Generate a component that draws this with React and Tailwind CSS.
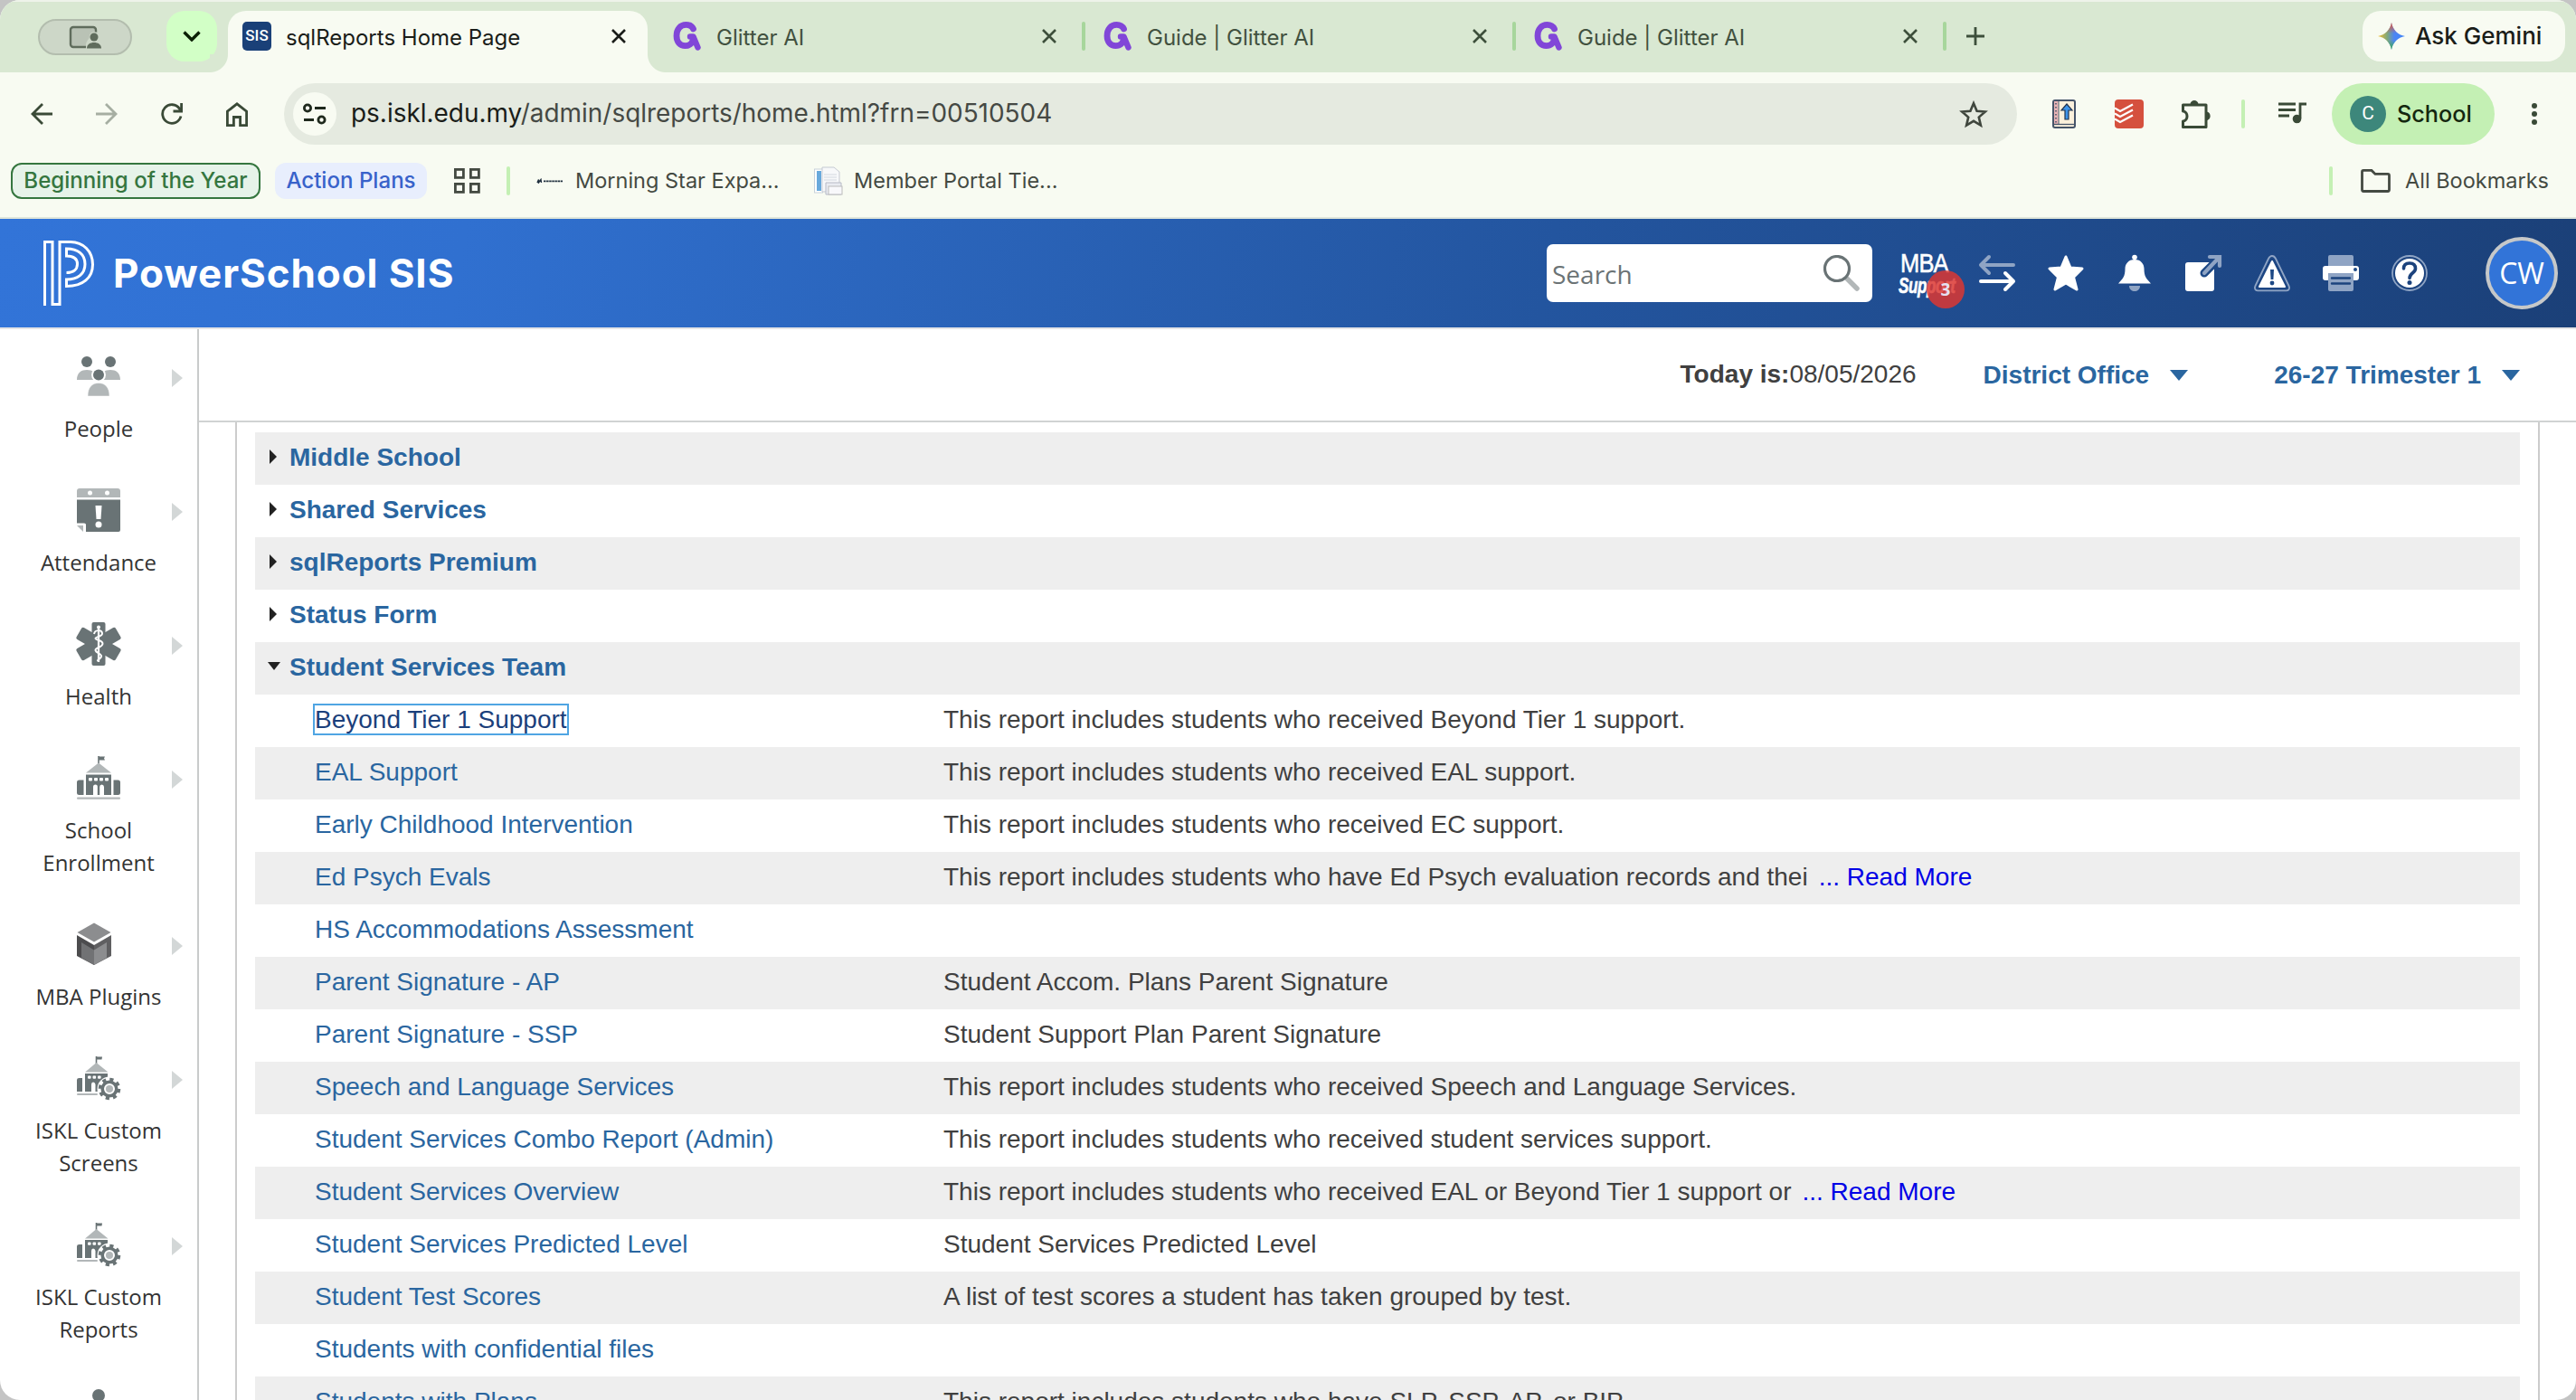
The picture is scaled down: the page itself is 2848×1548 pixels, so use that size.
import React from "react";

const INTER = "font-['Inter','Liberation_Sans',sans-serif]";
const ARIAL = "font-['Liberation_Sans',sans-serif]";
const OPEN = "font-['Open_Sans',sans-serif]";

function Close({ color }) {
  return (
    <svg viewBox="0 0 16 16" className="h-4 w-4 shrink-0" fill="none" stroke={color} strokeWidth="2.6">
      <path d="M1 1 15 15M15 1 1 15" />
    </svg>
  );
}

function Glitter() {
  return (
    <svg viewBox="0 0 32 32" className="h-8 w-8 shrink-0" fill="none">
      <path d="M22.500 8C21 4.800 17.500 3.400 14.500 3.400C8 3.400 4 8.500 4 15.500C4 22.500 8 26.600 13.500 26.600C18.500 26.600 22 23.500 22.500 18.500" stroke="#8146d8" strokeWidth="6.8" strokeLinecap="round" strokeLinejoin="round" />
      <path d="M19 16.500H22.500L27.500 28.500" stroke="#8146d8" strokeWidth="6.4" strokeLinecap="round" strokeLinejoin="round" />
    </svg>
  );
}

function Tab({ title }) {
  return (
    <div className="flex h-14 w-[478px] shrink-0 items-center pl-[22px]">
      <Glitter />
      <div className="ml-4 flex-1 whitespace-nowrap pt-[3px] text-[24px] text-[#42513f]">{title}</div>
      <Close color="#3d4f3b" />
      <div className="ml-7 h-8 w-1 rounded-full bg-[#a7d69c]" />
    </div>
  );
}

function TabStrip() {
  return (
    <div className="flex h-20 items-start bg-[#d9e8d2] pt-3 shadow-[inset_0_2px_0_#eef3ea]">
      <div className="mt-[9px] ml-[42px] flex h-10 w-[104px] items-center justify-center rounded-full border-2 border-[#b3bdae] bg-[#cdd7c8]">
        <svg viewBox="0 0 38 28" className="h-7 w-[38px]" fill="none">
          <rect x="3" y="3" width="28" height="22" rx="3" fill="#b9c2b5" stroke="#5f6c5c" strokeWidth="2.400" />
          <path d="M20 28V22C21 17 24 16 24 13C24 8 32 6 36 12V28Z" fill="#cdd7c8" />
          <circle cx="29" cy="14" r="4.500" fill="#5f6c5c" />
          <path d="M21 26.500C21 22 25 20 29 20S37 22 37 26.500Z" fill="#5f6c5c" />
        </svg>
      </div>
      <div className="ml-[38px] flex h-14 w-14 items-center justify-center rounded-[20px] bg-[#d2ffc6]">
        <svg viewBox="0 0 20 12" className="h-3 w-5" fill="none" stroke="#0b2005" strokeWidth="3.400"><path d="M1.500 1.500 10 10 18.500 1.500" /></svg>
      </div>
      <div className="flex h-[68px] w-3 items-end">
        <div className="-ml-2 h-5 w-5 shrink-0 bg-[radial-gradient(circle_at_0_0,#d9e8d2_19.500px,#f8fbf2_20.500px)]" />
      </div>
      <div className="flex h-[68px] w-[464px] items-start rounded-t-[20px] bg-[#f8fbf2] pl-4">
        <div className="mt-3 flex h-8 w-8 items-center justify-center rounded-[5px] bg-[#1a4078] font-['Roboto',sans-serif] text-[17px] font-medium text-white">SIS</div>
        <div className="ml-4 flex h-14 flex-1 items-center whitespace-nowrap pt-[3px] text-[24px] text-[#1a1d19]">sqlReports Home Page</div>
        <div className="mr-6 flex h-14 items-center"><Close color="#1a1d19" /></div>
      </div>
      <div className="flex h-[68px] w-[6px] items-end">
        <div className="h-5 w-5 shrink-0 bg-[radial-gradient(circle_at_100%_0,#d9e8d2_19.500px,#f8fbf2_20.500px)]" />
      </div>
      <Tab title="Glitter AI" />
      <div className="-ml-[2px] flex">
        <Tab title="Guide | Glitter AI" />
        <div className="-ml-[2px]"><Tab title="Guide | Glitter AI" /></div>
      </div>
      <svg viewBox="0 0 20 20" className="mt-[18px] ml-[22px] h-5 w-5" fill="none" stroke="#3d4f3b" strokeWidth="2.800"><path d="M10 0V20M0 10H20" /></svg>
      <div className="mr-3 ml-auto flex h-14 w-56 items-center rounded-[20px] bg-[#f8fbf2] pl-[17px]">
        <svg viewBox="0 0 30 30" className="h-[30px] w-[30px]">
          <defs>
            <linearGradient id="gl" x1="0" y1="0.500" x2="1" y2="0.500"><stop offset="0" stopColor="#f4bd2c" /><stop offset=".35" stopColor="#7fa87c" /><stop offset=".6" stopColor="#4c86f4" /><stop offset="1" stopColor="#3f83f8" /></linearGradient>
            <linearGradient id="gt" x1="0.500" y1="0" x2="0.500" y2="1"><stop offset="0" stopColor="#e94b3c" /><stop offset=".4" stopColor="#e94b3c" stopOpacity="0" /><stop offset=".65" stopColor="#2ea84f" stopOpacity="0" /><stop offset="1" stopColor="#2ea84f" /></linearGradient>
          </defs>
          <path d="M15 0C16.500 8 22 13.500 30 15C22 16.500 16.500 22 15 30C13.500 22 8 16.500 0 15C8 13.500 13.500 8 15 0Z" fill="url(#gl)" />
          <path d="M15 0C16.500 8 22 13.500 30 15C22 16.500 16.500 22 15 30C13.500 22 8 16.500 0 15C8 13.500 13.500 8 15 0Z" fill="url(#gt)" />
        </svg>
        <div className="mb-[2px] ml-[11px] whitespace-nowrap text-[26px] font-medium text-[#1a1d19]">Ask Gemini</div>
      </div>
    </div>
  );
}

function Toolbar() {
  return (
    <div className="flex h-[92px] items-center bg-[#f8fbf2] pl-[34px]">
      <svg viewBox="0 0 24 24" className="h-6 w-6" fill="none" stroke="#3a4a37" strokeWidth="2.800"><path d="M24 12H2M13 1 2 12 13 23" /></svg>
      <svg viewBox="0 0 24 24" className="ml-12 h-6 w-6" fill="none" stroke="#a6aea2" strokeWidth="2.800"><path d="M0 12H22M11 1 22 12 11 23" /></svg>
      <svg viewBox="0 0 24 24" className="ml-12 h-6 w-6" fill="none" stroke="#3a4a37" strokeWidth="2.800"><path d="M22 14.500A10.300 10.300 0 1 1 20.500 6.200L22.500 9M22.600 0V9H13.500" /></svg>
      <svg viewBox="0 0 24 27" className="ml-12 h-[27px] w-6" fill="none" stroke="#3a4a37" strokeWidth="2.800"><path d="M1.400 10.200 12 1.800 22.600 10.200V25.600H15.600V16.500H8.400V25.600H1.400Z" /></svg>
      <div className="ml-10 flex h-[68px] w-[1916px] items-center rounded-full bg-[#e5eae0] pl-[10px]">
        <div className="flex h-12 w-12 items-center justify-center rounded-full bg-[#f8fbf2]">
          <svg viewBox="0 0 26 24" className="h-6 w-[26px]" fill="none" stroke="#1f291d" strokeWidth="2.800"><circle cx="5" cy="5.500" r="3.600" /><path d="M13 5.500H25M1 18.500H12" /><circle cx="20.500" cy="18.500" r="3.600" /></svg>
        </div>
        <div className="ml-4 whitespace-nowrap text-[27.950px] text-[#454944]"><span className="text-[#1a1d19]">ps.iskl.edu.my</span>/admin/sqlreports/home.html?frn=00510504</div>
        <svg viewBox="0 0 32 31" className="mr-8 ml-auto h-[31px] w-8" fill="none" stroke="#3f463d" strokeWidth="2.600"><path d="M16 3.200 19.600 11.700 28.800 12.500 21.800 18.600 23.900 27.600 16 22.800 8.100 27.600 10.200 18.600 3.200 12.500 12.400 11.700Z" /></svg>
      </div>
      <svg viewBox="0 0 26 32" className="ml-[39px] h-8 w-[26px]">
        <rect x="1" y="1" width="24" height="30" rx="2" fill="#fbf0dc" stroke="#46546a" strokeWidth="2" />
        <rect x="2" y="2" width="4.500" height="25" fill="#e9b3b6" /><path d="M7 2V27" stroke="#46546a" strokeWidth="1" /><path d="M4 4V27" stroke="#46546a" strokeWidth="1.600" strokeDasharray="1.500 2.500" />
        <path d="M2 27.500H24" stroke="#46546a" strokeWidth="1.300" />
        <path d="M16 5 22 12H18V22H14V12H10Z" fill="#3f94ea" stroke="#22344f" strokeWidth="1.200" />
      </svg>
      <svg viewBox="0 0 32 32" className="ml-[43px] h-8 w-8">
        <rect width="32" height="32" rx="4" fill="#d5503e" />
        <path d="M0 9.500 6 13 20 5.500M0 15.500 6 19 20 11.500M0 21.500 6 25 20 17.500" fill="none" stroke="#fff" strokeWidth="2.200" />
      </svg>
      <svg viewBox="0 0 34 33" className="ml-[41px] h-[33px] w-[34px]">
        <path d="M2.500 13V6H28V30.500H2.500V24C8.500 23.500 8.500 13.500 2.500 13Z" fill="none" stroke="#3a4a37" strokeWidth="3" strokeLinejoin="round" />
        <path d="M10.500 5.500C10.500-.5 19.500-.5 19.500 5.500ZM28.500 13.500C34 13.500 34 23 28.500 23Z" fill="#3a4a37" />
      </svg>
      <div className="ml-[33px] h-8 w-1 rounded-full bg-[#c4f0b4]" />
      <svg viewBox="0 0 32 24" className="mb-[2px] ml-[37px] h-6 w-8" fill="none" stroke="#3a4a37" strokeWidth="2.800"><path d="M0 2H19M0 8.500H19M0 15H12M24 18V2H31" /><circle cx="20.500" cy="18.500" r="4.800" fill="#3a4a37" stroke="none" /></svg>
      <div className="ml-[27px] flex h-[68px] w-[180px] items-center rounded-full bg-[#c4f0b4] pl-5">
        <div className="flex h-10 w-10 items-center justify-center rounded-full bg-[#3d877b] font-['Roboto',sans-serif] text-[21px] text-white">C</div>
        <div className="ml-3 pt-px text-[25.200px] font-medium text-[#14270f]">School</div>
      </div>
      <div className="ml-[41px] flex flex-col gap-[3px]">
        <div className="h-[6px] w-[6px] rounded-full bg-[#3a4a37]" /><div className="h-[6px] w-[6px] rounded-full bg-[#3a4a37]" /><div className="h-[6px] w-[6px] rounded-full bg-[#3a4a37]" />
      </div>
    </div>
  );
}

function Bookmarks() {
  return (
    <div className="flex h-[70px] items-start border-b-2 border-[#dfe5da] bg-[#f8fbf2] pt-2 pl-3">
      <div className="flex h-10 w-[276px] items-center justify-center whitespace-nowrap rounded-[12px] border-2 border-[#35763f] bg-[#e6f3e9] text-[24.100px] font-medium text-[#35763f]">Beginning of the Year</div>
      <div className="ml-4 flex h-10 w-[168px] items-center justify-center whitespace-nowrap rounded-[12px] bg-[#e8eefd] text-[24.100px] font-medium text-[#3862ca]">Action Plans</div>
      <svg viewBox="0 0 29 28" className="mt-[6px] ml-[30px] h-7 w-[29px]" fill="none" stroke="#444a42" strokeWidth="2.800"><rect x="1.400" y="1.400" width="9" height="9" /><rect x="18.400" y="1.400" width="9" height="9" /><rect x="1.400" y="17.400" width="9" height="9" /><rect x="18.400" y="17.400" width="9" height="9" /></svg>
      <div className="mt-1 ml-[29px] h-8 w-1 rounded-full bg-[#c4f0b4]" />
      <svg viewBox="0 0 30 6" className="mt-[17px] ml-[29px] h-[6px] w-[30px]"><path d="M1 5 2.500 1.500V5L5 1.500 5.500 5" stroke="#20303f" strokeWidth="1.400" fill="none" /><path d="M8 3.300H29" stroke="#20303f" strokeWidth="1.700" strokeDasharray="2.500 .6" /></svg>
      <div className="ml-[13px] flex h-10 w-[264px] items-center whitespace-nowrap text-[23.500px] text-[#444a42]">Morning Star Expa...</div>
      <svg viewBox="0 0 32 32" className="mt-1 h-8 w-8">
        <rect x=".5" y="3" width="9" height="26" fill="#fff" stroke="#c8d2da" /><rect x="3" y="5" width="5" height="22" fill="#68a9dc" /><path d="M9 1H22L28 6V28H9Z" fill="#f7f8fa" stroke="#c5c9d2" /><path d="M11 9H25M11 12H25M11 15H25" stroke="#d4d8e0" strokeWidth="1.200" /><path d="M13 18H30V31H13Z" fill="#e9ebf1" stroke="#b6bac6" /><rect x="16" y="22" width="15" height="9" fill="#f8f8fb" stroke="#bbb" />
      </svg>
      <div className="ml-3 flex h-10 items-center whitespace-nowrap text-[23.500px] text-[#444a42]">Member Portal Tie...</div>
      <div className="mt-1 ml-auto h-8 w-1 rounded-full bg-[#c4f0b4]" />
      <svg viewBox="0 0 33 26" className="mt-[7px] ml-[31px] h-[26px] w-[33px]" fill="none" stroke="#444a42" strokeWidth="2.800"><path d="M3 1.400H12L16 5.400H30Q31.500 5.400 31.500 7V22.500Q31.500 24.500 30 24.500H3Q1.500 24.500 1.500 22.500V3Q1.500 1.400 3 1.400Z" /></svg>
      <div className="mr-[30px] ml-4 flex h-10 items-center whitespace-nowrap text-[23.500px] text-[#444a42]">All Bookmarks</div>
    </div>
  );
}

function HeaderIcon({ children }) {
  return <svg viewBox="0 0 40 40" className="h-10 w-10 shrink-0 overflow-visible" fill="none">{children}</svg>;
}

function AppHeader() {
  const dim = "#8fa4c4";
  return (
    <div className={`${OPEN} flex h-[122px] items-center border-b-2 border-[#e4e4e6] bg-[linear-gradient(100deg,#3274d8_0%,#3070d0_18%,#23559f_60%,#1b4078_100%)]`}>
      <svg viewBox="0 0 56 72" className="ml-12 h-[72px] w-14" fill="none" stroke="#fff" strokeWidth="3">
        <path d="M1.500 72V1.500H10V70.500H18V1.500H30C44 1.500 54.500 12 54.500 26.500S44 50.500 25.500 50.500V43C38 43 46 37 46 26S38 9 25.500 9V17C33 17 37.500 20 37.500 26S33 35.500 25.500 35.500" />
      </svg>
      <div className={`${INTER} ml-[21px] w-[400px] whitespace-nowrap text-[44px] font-bold tracking-[0.9px] text-white`}>PowerSchool SIS</div>
      <div className="ml-auto flex h-16 w-[360px] items-center rounded-[7px] bg-white pl-[6px]">
        <div className="pt-[2px] text-[28px] text-[#6b7375]">Search</div>
        <svg viewBox="0 0 40 40" className="mr-[14px] ml-auto h-10 w-10" fill="none"><path d="M26 26 37 37" stroke="#b2b7b8" strokeWidth="5.500" strokeLinecap="round" /><circle cx="15" cy="15" r="13.500" stroke="#697375" strokeWidth="3.200" /></svg>
      </div>
      <div className={`${ARIAL} relative ml-[29px] h-16 w-[60px] text-white`}>
        <div className="mt-[6px] ml-[2px] text-[30px] leading-[30px] tracking-[-1px] [transform-origin:0_0] scale-x-[0.85] [-webkit-text-stroke:0.6px_white]">MBA</div>
        <div className="-mt-px text-[23px] leading-[22px] font-bold italic tracking-[-0.5px] [transform-origin:0_0] scale-x-[0.74] [-webkit-text-stroke:0.6px_white]">Support</div>
        <div className={`${OPEN} absolute top-[29px] left-[31px] flex h-[42px] w-[42px] items-center justify-center rounded-full bg-[#dc3732]/85 text-[19px] font-bold text-[#e5e0f0]`}>3</div>
      </div>
      <div className="ml-[29px] flex w-[496px] items-center justify-between">
        <HeaderIcon>
          <path d="M11 2 2 11 11 20M3 11H38" stroke={dim} strokeWidth="4" strokeLinecap="round" strokeLinejoin="round" />
          <path d="M29 20 38 29 29 38M37 29H2" stroke="#fff" strokeWidth="4" strokeLinecap="round" strokeLinejoin="round" />
        </HeaderIcon>
        <HeaderIcon><path d="M20 2 25 14 38 15 28.500 24.500 32 38 20 31 8 38 11.500 24.500 2 15 15 14Z" fill="#fff" stroke="#fff" strokeWidth="3" strokeLinejoin="round" /></HeaderIcon>
        <HeaderIcon>
          <circle cx="20" cy="2.500" r="2.800" fill="#fff" />
          <path d="M20 5C27 5 30.500 10 30.500 15C30.500 24 33 26 38 31.500H2C7 26 9.500 24 9.500 15C9.500 10 13 5 20 5Z" fill="#fff" />
          <path d="M14 34H26C26 42 14 42 14 34Z" fill={dim} />
        </HeaderIcon>
        <HeaderIcon>
          <rect x="0" y="8" width="32" height="32" rx="3" fill="#fff" />
          <path d="M21 20 36 5" stroke="#1d4885" strokeWidth="9" strokeLinecap="round" /><path d="M27 2H38V12M37 3 21 20" stroke={dim} strokeWidth="4.200" strokeLinecap="round" />
        </HeaderIcon>
        <HeaderIcon>
          <path d="M20 1C22 1 23 2 24 4L38.500 34C40 37 38.500 39.300 36 39.300H4C1.500 39.300 0 37 1.500 34L16 4C17 2 18 1 20 1Z" stroke={dim} strokeWidth="1.800" />
          <path d="M20 7 34 35H6Z" fill="#fff" stroke="#fff" strokeWidth="2" strokeLinejoin="round" /><path d="M18 16H22L21.400 27H18.600Z" fill="#1d4885" /><circle cx="20" cy="31" r="2.400" fill="#1d4885" />
        </HeaderIcon>
        <HeaderIcon>
          <rect x="6" y="0" width="28" height="14" rx="2" fill={dim} /><rect x="0" y="12" width="40" height="16" rx="3" fill="#fff" /><circle cx="36" cy="16" r="2" fill="#1d4885" />
          <path d="M6 20H34V38Q34 40 32 40H8Q6 40 6 38Z" fill={dim} /><path d="M10 25.500H30M10 31.500H30" stroke="#1c437d" strokeWidth="2.400" strokeLinecap="round" />
        </HeaderIcon>
        <HeaderIcon>
          <circle cx="20" cy="20" r="19" stroke={dim} strokeWidth="1.800" /><circle cx="20" cy="20" r="16" fill="#fff" />
          <path d="M13.500 15C13.500 11 16 9 20 9S26.500 11 26.500 15C26.500 20 20 19.500 20 25.500" stroke="#1c437d" strokeWidth="3.600" strokeLinecap="round" /><circle cx="20" cy="30.500" r="2.500" fill="#1c437d" />
        </HeaderIcon>
      </div>
      <div className="mr-5 ml-16 flex h-20 w-20 items-center justify-center rounded-full border-4 border-[#c6c8c9] bg-[#3274d8] text-[32px] text-white">CW</div>
    </div>
  );
}

function People() {
  return (
    <g>
      <circle cx="11" cy="8" r="6" fill="#697375" /><circle cx="37" cy="8" r="6" fill="#697375" />
      <path d="M0 28C0 20 5 17 11 17S22 20 22 28ZM26 28C26 20 31 17 37 17S48 20 48 28Z" fill="#b2b7b8" />
      <circle cx="24" cy="22.500" r="8" fill="#fff" /><circle cx="24" cy="22.500" r="6" fill="#697375" />
      <path d="M12 46C12 36 17 31.500 24 31.500S36 36 36 46Z" fill="#b2b7b8" stroke="#fff" strokeWidth=".5" />
    </g>
  );
}
function Calendar() {
  return (
    <g>
      <path d="M0 10V3Q0 0 3 0H45Q48 0 48 3V10Z" fill="#b2b7b8" /><circle cx="14.500" cy="5" r="2.500" fill="#fff" /><circle cx="33.500" cy="5" r="2.500" fill="#fff" />
      <path d="M0 12.500H48V46Q48 48 46 48H10V40Q10 38.500 8 38.500H0Z" fill="#697375" /><path d="M0 41H7V48Z" fill="#b2b7b8" />
      <path d="M20.500 19H27.500L26.500 34H21.500Z" fill="#fff" /><circle cx="24" cy="40" r="3.500" fill="#fff" />
    </g>
  );
}
function Health() {
  return (
    <g>
      <g fill="#697375"><rect x="16.500" y="0" width="15" height="48" rx="2" /><rect x="16.500" y="-1" width="15" height="50" rx="2" transform="rotate(60 24 24)" /><rect x="16.500" y="-1" width="15" height="50" rx="2" transform="rotate(-60 24 24)" /></g>
      <path d="M24 6V44" stroke="#fff" strokeWidth="2.200" /><circle cx="24" cy="5.500" r="2" fill="#fff" />
      <path d="M19 13C20 8 27 8 28 12S20 16 20.500 18S29 20 28.500 24S20 28 20.500 31S26 34 27 37S22 41 23 43" fill="none" stroke="#fff" strokeWidth="2" />
    </g>
  );
}
function School() {
  return (
    <g>
      <path d="M24 8V0" stroke="#697375" strokeWidth="1.600" /><path d="M24 .5H31L30 2.500 31 4.500H24Z" fill="#697375" />
      <path d="M24 7.500 38 18.500H10Z" fill="#b2b7b8" /><path d="M10 20.500H38V43H10Z" fill="#697375" />
      <path d="M0 29Q0 26.500 2.500 26.500H7.500V43H2.500Q0 43 0 41ZM48 29Q48 26.500 45.500 26.500H40.500V43H45.500Q48 43 48 41Z" fill="#697375" />
      <g fill="#fff"><rect x="13" y="24" width="4" height="3.600" rx="1" /><rect x="19" y="24" width="4" height="3.600" rx="1" /><rect x="25" y="24" width="4" height="3.600" rx="1" /><rect x="31" y="24" width="4" height="3.600" rx="1" /><path d="M18 43V34Q18 31.500 20.500 31.500T22.800 34V43ZM25.200 43V34Q25.200 31.500 27.500 31.500T30 34V43Z" /></g>
      <rect x="0" y="45.500" width="48" height="2.200" rx="1" fill="#b2b7b8" />
    </g>
  );
}
function Cube() {
  return (
    <g>
      <path d="M19 .5 37.500 11 19 21.500.5 11Z" fill="#8c8d8f" />
      <path d="M0 14 19 25V47L0 37Z" fill="#4c4c4e" /><path d="M38 14 19 25V47L38 37Z" fill="#5f5f61" />
      <path d="M5 22 19 30.500V47L5 39Z" fill="#717274" /><path d="M33 22 19 30.500V47L33 39Z" fill="#8c8d8f" />
    </g>
  );
}
function SchoolGear() {
  return (
    <g>
      <path d="M21.500 8V0" stroke="#697375" strokeWidth="1.600" /><path d="M21.500 .5H28L27.500 3.500H21.500Z" fill="#697375" />
      <path d="M21.500 7 34.500 17.500H9Z" fill="#b2b7b8" /><path d="M9 19H34V26L26 32V39H9Z" fill="#697375" />
      <path d="M0 26Q0 24 2.500 24H6V39H0Z" fill="#697375" />
      <g fill="#fff"><rect x="12" y="21.500" width="3.600" height="3.200" rx="1" /><rect x="17.500" y="21.500" width="3.600" height="3.200" rx="1" /><rect x="23" y="21.500" width="3.600" height="3.200" rx="1" /><path d="M16 39V31Q16 28.500 18 28.500T20.500 31V39Z" /></g>
      <rect x="0" y="41" width="23" height="2" rx="1" fill="#b2b7b8" />
      <circle cx="36" cy="36" r="13.500" fill="#fff" /><circle cx="36" cy="36" r="10.600" fill="none" stroke="#697375" strokeWidth="3.400" strokeDasharray="4.160 4.160" /><circle cx="36" cy="36" r="7.800" fill="none" stroke="#697375" strokeWidth="3.600" /><circle cx="36" cy="36" r="4" fill="#b2b7b8" />
    </g>
  );
}
function Person() {
  return <circle cx="24" cy="7" r="7" fill="#697375" />;
}

const NAV = [
  { icon: <People />, label: ["People"] },
  { icon: <Calendar />, label: ["Attendance"] },
  { icon: <Health />, label: ["Health"] },
  { icon: <School />, label: ["School", "Enrollment"] },
  { icon: <Cube />, label: ["MBA Plugins"] },
  { icon: <SchoolGear />, label: ["ISKL Custom", "Screens"] },
  { icon: <SchoolGear />, label: ["ISKL Custom", "Reports"] },
];

function Sidebar() {
  return (
    <div className={`${OPEN} flex w-[220px] shrink-0 flex-col border-r-2 border-[#c9cbcb] pt-7`}>
      {NAV.map((n, i) => (
        <div key={i} className="mb-12 shrink-0">
          <div className="flex h-12 items-center pl-[85px]">
            <svg viewBox="0 0 48 48" className="h-12 w-12 overflow-visible">{n.icon}</svg>
            <svg viewBox="0 0 12 20" className="mt-1 ml-[57px] h-5 w-3"><path d="M0 0 12 10 0 20Z" fill="#d3d7d7" /></svg>
          </div>
          <div className="pt-4 text-center text-[24px] leading-9 text-[#333]">{n.label.map((l) => <div key={l}>{l}</div>)}</div>
        </div>
      ))}
      <div className="pl-[85px]"><svg viewBox="0 0 48 48" className="h-12 w-12"><Person /></svg></div>
    </div>
  );
}

const GROUPS = ["Middle School", "Shared Services", "sqlReports Premium", "Status Form"];
const REPORTS = [
  ["Beyond Tier 1 Support", "This report includes students who received Beyond Tier 1 support."],
  ["EAL Support", "This report includes students who received EAL support."],
  ["Early Childhood Intervention", "This report includes students who received EC support."],
  ["Ed Psych Evals", "This report includes students who have Ed Psych evaluation records and thei", true],
  ["HS Accommodations Assessment", ""],
  ["Parent Signature - AP", "Student Accom. Plans Parent Signature"],
  ["Parent Signature - SSP", "Student Support Plan Parent Signature"],
  ["Speech and Language Services", "This report includes students who received Speech and Language Services."],
  ["Student Services Combo Report (Admin)", "This report includes students who received student services support."],
  ["Student Services Overview", "This report includes students who received EAL or Beyond Tier 1 support or", true],
  ["Student Services Predicted Level", "Student Services Predicted Level"],
  ["Student Test Scores", "A list of test scores a student has taken grouped by test."],
  ["Students with confidential files", ""],
  ["Students with Plans", "This report includes students who have SLP, SSP, AP, or BIP."],
];

function Group({ name, open }) {
  return (
    <div className="flex h-[58px] shrink-0 items-center pb-[2px] pl-[14px] odd:bg-[#eee]">
      {open
        ? <svg viewBox="0 0 14 9" className="mb-1 h-[9px] w-[14px]"><path d="M0 0H14L7 9Z" fill="#222" /></svg>
        : <svg viewBox="0 0 14 16" className="mb-[2px] h-4 w-[14px]"><path d="M2 0 10 8 2 16Z" fill="#222" /></svg>}
      <div className="ml-[10px] font-bold text-[#2a66a0]">{name}</div>
    </div>
  );
}

function Main() {
  return (
    <div className={`${ARIAL} flex min-w-0 flex-1 flex-col text-[28px]`}>
      <div className="flex h-[103px] shrink-0 items-center justify-end border-b-2 border-[#d0d3d3]">
        <div className="pb-[2px] text-[#404040]"><b>Today is:</b>08/05/2026</div>
        <div className="ml-[74px] font-bold text-[#2a66a0]">District Office</div>
        <svg viewBox="0 0 20 12" className="ml-[23px] h-3 w-5"><path d="M0 0H20L10 12Z" fill="#2a66a0" /></svg>
        <div className="ml-[95px] font-bold text-[#2a66a0]">26-27 Trimester 1</div>
        <svg viewBox="0 0 20 12" className="mr-[62px] ml-[23px] h-3 w-5"><path d="M0 0H20L10 12Z" fill="#2a66a0" /></svg>
      </div>
      <div className="mr-10 ml-10 flex flex-1 flex-col overflow-hidden border-x-2 border-[#ccc] px-5 pt-[11px]">
        {GROUPS.map((g) => <Group key={g} name={g} />)}
        <Group name="Student Services Team" open />
        {REPORTS.map(([name, desc, more], i) => (
          <div key={name} className="flex h-[58px] shrink-0 items-center whitespace-nowrap pb-[2px] pl-[66px] odd:bg-[#eee]">
            <div className="w-[695px]">
              <span className={i === 0 ? "text-[#1b3f7b] outline-2 outline-[#4fa5e3]" : "text-[#2a66a0]"}>{name}</span>
            </div>
            <div className="text-[#404040]">{desc}</div>
            {more && <div className="ml-3 text-[#0000e6]">... Read More</div>}
          </div>
        ))}
      </div>
    </div>
  );
}

export default function App() {
  return (
    <div className="h-[1548px] w-[2848px] overflow-hidden bg-[#c4c4c4]">
      <div className={`${INTER} flex h-full w-full flex-col overflow-hidden rounded-[22px] bg-white`}>
        <TabStrip />
        <Toolbar />
        <Bookmarks />
        <AppHeader />
        <div className="flex min-h-0 flex-1">
          <Sidebar />
          <Main />
        </div>
      </div>
    </div>
  );
}
